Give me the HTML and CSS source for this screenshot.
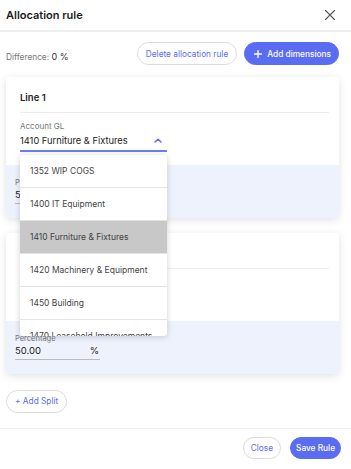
FILE: index.html
```html
<!doctype html>
<html lang="en">
<head>
    <meta charset="UTF-8">
    <title>Allocation rule</title>
    <link rel="stylesheet" href="styles.css">
</head>
<body>
    <div class="header">
        <h2>Allocation rule</h2>
        <svg class="close-icon" width="12" height="12" viewBox="0 0 12 12">
            <path d="M1.5 1.5L10.5 10.5M10.5 1.5L1.5 10.5" stroke="#555" stroke-width="1.1" stroke-linecap="round"/>
        </svg>
    </div>

    <div class="toolbar">
        <div class="difference">Difference: <span>0 %</span></div>
        <div class="actions">
            <button class="btn btn-outline">Delete allocation rule</button>
            <button class="btn btn-primary">
                <svg width="8" height="8" viewBox="0 0 8 8"><path d="M4 0.5V7.5M0.5 4H7.5" stroke="#fff" stroke-width="1.3" stroke-linecap="round"/></svg>
                Add dimensions
            </button>
        </div>
    </div>

    <div class="card">
        <div class="card-body">
            <h3>Line 1</h3>
            <div class="field">
                <label>Account GL</label>
                <div class="select active">
                    <span>1410 Furniture &amp; Fixtures</span>
                    <svg width="8" height="5" viewBox="0 0 8 5"><path d="M1 4L4 1.2L7 4" fill="none" stroke="#5a6cf2" stroke-width="1.5" stroke-linecap="round" stroke-linejoin="round"/></svg>
                </div>
                <ul class="dropdown">
                    <li>1352 WIP COGS</li>
                    <li>1400 IT Equipment</li>
                    <li class="selected">1410 Furniture &amp; Fixtures</li>
                    <li>1420 Machinery &amp; Equipment</li>
                    <li>1450 Building</li>
                    <li>1470 Leasehold Improvements</li>
                </ul>
            </div>
        </div>
        <div class="card-foot">
            <label>Percentage</label>
            <div class="percent"><span>50.00</span><span>%</span></div>
        </div>
    </div>

    <div class="card">
        <div class="card-body">
            <h3>Line 2</h3>
            <div class="field">
                <label>Account GL</label>
                <div class="select">
                    <span>1420 Machinery &amp; Equipment</span>
                </div>
            </div>
        </div>
        <div class="card-foot">
            <label>Percentage</label>
            <div class="percent"><span>50.00</span><span>%</span></div>
        </div>
    </div>

    <div class="split-row">
        <button class="btn btn-outline">+ Add Split</button>
    </div>

    <div class="footer">
        <button class="btn btn-outline">Close</button>
        <button class="btn btn-primary">Save Rule</button>
    </div>
</body>
</html>
```

FILE: styles.css
```css
body {
    margin: 0;
    font-family: 'Inter', 'Liberation Sans', sans-serif;
    background-color: white;
    color: #222;
    width: 351px;
    height: 469px;
    overflow: hidden;
}
.header {
    display: flex;
    justify-content: space-between;
    align-items: center;
    height: 30px;
    padding: 0 15px 0 6px;
    border-bottom: 2px solid #eeeeee;
}
.header h2 {
    margin: 0;
    font-size: 11px;
    font-weight: 600;
    color: #1c1c1c;
}
.toolbar {
    display: flex;
    justify-content: space-between;
    align-items: flex-end;
    padding: 10px 12px 0 6px;
}
.difference {
    font-size: 8.3px;
    color: #777;
    padding-bottom: 3px;
}
.difference span {
    font-size: 9px;
    color: #333;
}
.actions {
    display: flex;
    gap: 7px;
}
.btn {
    font-family: inherit;
    font-size: 8.3px;
    height: 23px;
    border-radius: 12px;
    padding: 0 8px;
    cursor: pointer;
    display: inline-flex;
    align-items: center;
    gap: 5px;
}
.btn-outline {
    background: white;
    border: 1px solid #dcdcdc;
    color: #5a6cf2;
}
.btn-primary {
    background: #5a6cf2;
    border: 1px solid #5a6cf2;
    color: white;
    font-weight: 500;
    padding: 0 7px 0 9px;
}
.card {
    margin: 12px 12px 0 6px;
    background: white;
    border-radius: 4px;
    box-shadow: 0 2px 8px rgba(0,0,0,0.12);
}
.card + .card {
    margin-top: 15px;
}
.card-body {
    padding: 15px 10px 15px 14px;
    height: 58px;
}
.card-body h3 {
    margin: 0;
    font-size: 9.5px;
    font-weight: 600;
    height: 20px;
    border-bottom: 1px solid #ececec;
}
.field {
    position: relative;
    width: 147px;
    margin-top: 8px;
}
.field label, .card-foot label {
    display: block;
    font-size: 7.5px;
    color: #777;
}
.field label {
    font-size: 8px;
}
.select {
    display: flex;
    justify-content: space-between;
    align-items: center;
    font-size: 9.3px;
    color: #222;
    height: 19px;
    border-bottom: 1px solid #ccc;
    padding-right: 5px;
}
.select.active {
    border-bottom: 2px solid #6d7df2;
}
.dropdown {
    position: absolute;
    top: 34px;
    left: 0;
    width: 147px;
    height: 181px;
    margin: 0;
    padding: 0;
    list-style: none;
    background: white;
    border-radius: 3px;
    box-shadow: 0 1px 6px rgba(0,0,0,0.18);
    overflow: hidden;
    z-index: 5;
}
.dropdown li {
    height: 32px;
    line-height: 32px;
    padding-left: 10px;
    font-size: 8.5px;
    color: #444;
    border-bottom: 1px solid #e4e4e4;
    white-space: nowrap;
}
.dropdown li.selected {
    background: #c8c8c8;
}
.card-foot {
    background: #eef2fd;
    height: 53px;
    padding: 13px 0 0 9px;
    box-sizing: border-box;
    border-radius: 0 0 4px 4px;
}
.percent {
    display: flex;
    justify-content: space-between;
    width: 84px;
    padding: 2px 1px 3px 0;
    font-size: 9.5px;
    color: #222;
    border-bottom: 1px solid #bbb;
}
.split-row {
    padding: 14px 0 0 6px;
    height: 40px;
}
.footer {
    display: flex;
    justify-content: flex-end;
    gap: 9px;
    padding: 8px 10px 0 0;
    border-top: 1px solid #eeeeee;
}
.footer .btn {
    height: 22px;
    border-radius: 11px;
    padding: 0 7px;
}
.footer .btn-primary {
    padding: 0 5px;
}
```
